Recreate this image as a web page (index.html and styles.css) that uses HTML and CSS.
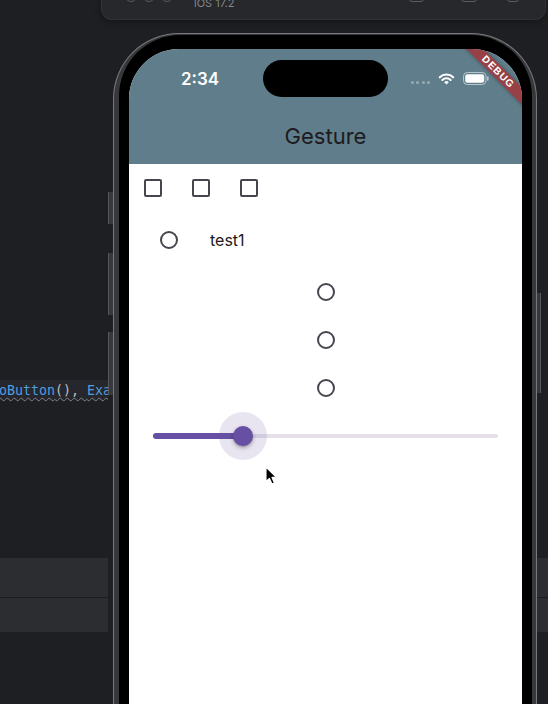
FILE: index.html
```html
<!DOCTYPE html>
<html lang="en">
<head>
  <meta charset="UTF-8" />
  <title>Gesture - Simulator</title>
  <link rel="stylesheet" href="styles.css">
</head>
<body>

  <!-- Simulator window title bar (mostly scrolled off the top) -->
  <header class="sim-bar">
    <div class="lights"><span></span><span></span><span></span></div>
    <div class="sim-title">iOS 17.2</div>
    <div class="sim-tools">
      <span class="tool shot"></span>
      <span class="tool home"></span>
      <span class="tool rotate"></span>
    </div>
  </header>

  <div class="stage">
    <aside class="editor">
      <div class="code-line"><span class="fn">RadioButton</span><span class="punct">(), </span><span class="fn">ExampleRadio</span></div>
      <div class="tool-panel"></div>
      <div class="tool-panel short"></div>
    </aside>

    <div class="side-keys">
      <span class="key action"></span>
      <span class="key vol-up"></span>
      <span class="key vol-down"></span>
    </div>

    <div class="frame">
      <div class="bezel">
        <div class="screen">
          <div class="app-bar">
            <div class="status">
              <div class="time">2:34</div>
              <div class="island"></div>
              <div class="sys">
                <div class="dots"><i></i><i></i><i></i><i></i></div>
                <svg class="wifi" width="17" height="12" viewBox="0 0 17 12">
                  <path d="M1.8 4.3 A9.5 9.5 0 0 1 15.2 4.3" fill="none" stroke="#fff" stroke-width="2.1" stroke-linecap="round"/>
                  <path d="M4.4 6.9 A5.8 5.8 0 0 1 12.6 6.9" fill="none" stroke="#fff" stroke-width="2.1" stroke-linecap="round"/>
                  <path d="M8.5 11.6 L6.2 9.3 A3.2 3.2 0 0 1 10.8 9.3 Z" fill="#fff"/>
                </svg>
                <svg class="battery" width="26" height="13" viewBox="0 0 26 13">
                  <rect x="0.5" y="0.5" width="22.5" height="12" rx="3.8" fill="none" stroke="rgba(255,255,255,0.55)"/>
                  <rect x="2.2" y="2.2" width="19" height="8.6" rx="2.2" fill="#fff"/>
                  <rect x="24" y="4.3" width="1.6" height="4.4" rx="0.8" fill="rgba(255,255,255,0.55)"/>
                </svg>
              </div>
            </div>
            <div class="toolbar">
              <h1>Gesture</h1>
            </div>
          </div>

          <main class="content">
            <div class="checks">
              <div class="cell"><span class="checkbox"></span></div>
              <div class="cell"><span class="checkbox"></span></div>
              <div class="cell"><span class="checkbox"></span></div>
            </div>

            <div class="tile">
              <div class="cell"><span class="radio"></span></div>
              <span class="tile-label">test1</span>
            </div>

            <div class="radio-col">
              <div class="cell"><span class="radio"></span></div>
              <div class="cell"><span class="radio"></span></div>
              <div class="cell"><span class="radio"></span></div>
            </div>

            <div class="slider">
              <div class="track">
                <div class="track-fill" style="width: 26%"></div>
                <div class="thumb" style="left: 26%"><span class="halo"></span><span class="knob"></span></div>
              </div>
            </div>
          </main>

          <div class="debug-banner">DEBUG</div>

          <svg class="cursor" width="13" height="19" viewBox="0 0 13 19">
            <path d="M1 1 L1 15.5 L4.4 12.3 L7 18 L9.4 17 L6.9 11.4 L11.4 11.4 Z" fill="#000" stroke="#fff" stroke-width="1.1" stroke-linejoin="round"/>
          </svg>
        </div>
      </div>
    </div>

    <div class="side-keys right">
      <span class="key power"></span>
      <div class="tool-panel"></div>
      <div class="tool-panel short"></div>
    </div>
  </div>

</body>
</html>
```

FILE: styles.css
```css
* { box-sizing: border-box; }

body {
  margin: 0;
  width: 548px;
  height: 704px;
  overflow: hidden;
  background: #1e1f22;
  font-family: Inter, "Liberation Sans", sans-serif;
  display: flex;
  flex-direction: column;
}

/* simulator title bar */
.sim-bar {
  height: 20px;
  margin: 0 2px 0 101px;
  background: #26282c;
  border: 1px solid #303236;
  border-top: none;
  border-radius: 0 0 11px 11px;
  display: flex;
  align-items: flex-start;
  padding: 0 26px 0 23px;
  box-shadow: 0 2px 6px rgba(0,0,0,0.35);
}

.lights { display: flex; gap: 6px; }
.lights span {
  width: 12px;
  height: 12px;
  margin-top: -10px;
  border-radius: 50%;
  border: 1px solid #595b60;
}

.sim-title {
  margin: -2px 0 0 21px;
  font-size: 11px;
  line-height: 11px;
  color: #83868b;
}

.sim-tools { margin-left: auto; display: flex; }
.tool {
  height: 12px;
  margin-top: -10px;
  border: 1px solid #5a5c61;
  border-radius: 3px;
}
.tool.shot { width: 15px; }
.tool.home { width: 16px; margin-left: 37px; }
.tool.rotate { width: 12px; margin-left: 30px; }

.stage {
  flex: 1;
  margin-top: 13px;
  display: flex;
}

/* code editor peeking out on the left */
.editor {
  width: 108px;
  display: flex;
  flex-direction: column;
  overflow: hidden;
}

.code-line {
  margin-top: 347px;
  height: 20px;
  background: #25272c;
  white-space: nowrap;
  font-family: "DejaVu Sans Mono", "Liberation Mono", monospace;
  font-size: 13.3px;
  line-height: 21px;
  text-indent: -33px;
  width: 113px;
  text-decoration: underline wavy #7d8086 1px;
  text-underline-offset: 2px;
}
.fn { color: #4f9ee0; }
.punct { color: #bcbec4; }

.tool-panel {
  height: 40px;
  margin-top: 158px;
  background: #2b2d30;
  border-bottom: 1px solid #1b1c1f;
}
.tool-panel.short {
  height: 34px;
  margin-top: 0;
  border-bottom: none;
}

/* phone hardware */
.side-keys {
  width: 5px;
  display: flex;
  flex-direction: column;
}
.key {
  display: block;
  width: 5px;
  background: #37383b;
  border-left: 1px solid #55575a;
}
.key.action { height: 32px; margin-top: 159px; }
.key.vol-up { height: 62px; margin-top: 29px; }
.key.vol-down { height: 63px; margin-top: 17px; }

.side-keys.right { width: 11px; }
.side-keys.right .key.power {
  width: 4px;
  height: 100px;
  margin-top: 260px;
  border-left: none;
  border-right: 1px solid #55575a;
}
.side-keys.right .tool-panel { margin-top: 165px; }
.side-keys.right .tool-panel.short { margin-top: 0; }

.frame {
  width: 424px;
  display: flex;
  flex-direction: column;
  background: #37383b;
  border: 1px solid #77787b;
  border-bottom: none;
  border-radius: 66px 66px 0 0;
  padding: 1px 4px 0 5px;
}

.bezel {
  flex: 1;
  display: flex;
  flex-direction: column;
  background: #000;
  border-radius: 61px 61px 0 0;
  padding: 14px 10px 0 10px;
}

.screen {
  flex: 1;
  position: relative;
  overflow: hidden;
  background: #fff;
  border-radius: 50px 50px 0 0;
}

/* flutter app */
.app-bar {
  height: 115px;
  padding-top: 11px;
  background: #607d8b;
}

.status {
  height: 37px;
  margin-bottom: 11px;
  display: flex;
  align-items: center;
}

.time {
  width: 134px;
  padding-left: 8px;
  text-align: center;
  color: #fff;
  font-size: 17px;
  font-weight: 600;
}

.island {
  width: 125px;
  height: 37px;
  background: #000;
  border-radius: 19px;
}

.sys {
  flex: 1;
  display: flex;
  align-items: center;
  justify-content: center;
  padding-right: 10px;
  gap: 8px;
}

.dots { display: flex; gap: 2.4px; margin-top: 8px; }
.dots i {
  width: 3px;
  height: 3px;
  border-radius: 50%;
  background: rgba(255,255,255,0.35);
}

.wifi, .battery { display: block; }

.toolbar {
  height: 56px;
  display: flex;
  align-items: center;
  justify-content: center;
}
.toolbar h1 {
  margin: 0;
  font-size: 22px;
  font-weight: 400;
  color: #1d1b20;
}

.cell {
  width: 48px;
  height: 48px;
  display: flex;
  align-items: center;
  justify-content: center;
  flex-shrink: 0;
}

.checks { display: flex; }

.checkbox {
  width: 18px;
  height: 18px;
  border: 2px solid #49454f;
  border-radius: 2px;
}

.radio {
  width: 18px;
  height: 18px;
  border: 2px solid #49454f;
  border-radius: 50%;
}

.tile {
  height: 56px;
  padding: 0 16px;
  display: flex;
  align-items: center;
  gap: 17px;
}
.tile-label {
  font-size: 16px;
  color: #1d1b20;
}

.radio-col {
  display: flex;
  flex-direction: column;
  align-items: center;
}

.slider {
  height: 48px;
  padding: 0 24px;
  display: flex;
  align-items: center;
}

.track {
  flex: 1;
  height: 4px;
  background: #e6e0e9;
  border-radius: 2px;
  position: relative;
}
.track-fill {
  height: 6px;
  margin-top: -1px;
  background: #6750a4;
  border-radius: 3px;
}

.thumb {
  position: absolute;
  top: 2px;
  width: 0;
  height: 0;
}
.halo, .knob {
  position: absolute;
  border-radius: 50%;
}
.halo {
  width: 48px;
  height: 48px;
  left: -24px;
  top: -24px;
  background: rgba(103,80,164,0.15);
}
.knob {
  width: 20px;
  height: 20px;
  left: -10px;
  top: -10px;
  background: #6750a4;
  box-shadow: 0 2px 4px rgba(0,0,0,0.3), 0 1px 1px rgba(0,0,0,0.15);
}

.debug-banner {
  position: absolute;
  left: 319px;
  top: 17px;
  width: 100px;
  height: 12px;
  transform: rotate(45deg);
  background: rgba(183,28,28,0.63);
  box-shadow: 0 0 4px rgba(0,0,0,0.35);
  color: #fff;
  font-family: "Liberation Sans", sans-serif;
  font-size: 10px;
  font-weight: 900;
  letter-spacing: 1px;
  line-height: 12px;
  text-align: center;
}

.cursor {
  position: absolute;
  left: 136px;
  top: 417px;
}
```
